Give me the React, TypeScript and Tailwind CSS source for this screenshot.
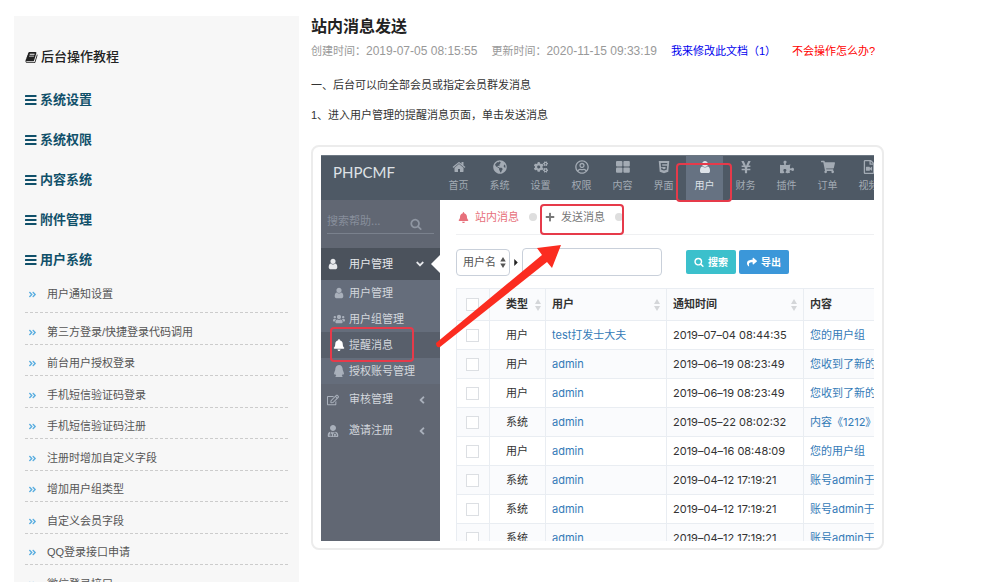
import { ReactNode } from "react";
import {
  FaAngleDoubleRight,
  FaAngleDown,
  FaAngleLeft,
  FaBell,
  FaCogs,
  FaGlobeAmericas,
  FaHtml5,
  FaPlus,
  FaPuzzlePiece,
  FaQq,
  FaRegEdit,
  FaRegFileVideo,
  FaRegUserCircle,
  FaShare,
  FaShoppingCart,
  FaUserMd,
  FaUsers,
  FaYenSign,
} from "react-icons/fa";

type IconProps = { className?: string };

function BookIcon({ className }: IconProps) {
  return (
    <svg viewBox="0 0 1792 1792" fill="currentColor" className={className}>
      <path d="M1703 478q40 57 18 129l-275 906q-19 64-76.5 107.5t-122.5 43.5h-923q-77 0-148.5-53.5t-99.5-131.5q-24-67-2-127 0-4 3-27t4-37q1-8-3-21.5t-3-19.5q2-11 8-21t16.5-23.5 16.5-23.5q23-38 45-91.5t30-91.5q3-10 .5-30t-.5-28q3-11 17-28t17-23q21-36 42-92t25-90q1-9-2.5-32t.5-28q4-13 22-30.5t22-22.5q19-26 42.5-84.5t27.5-96.5q1-8-3-25.5t-2-26.5q2-8 9-18t18-23 17-21q8-12 16.5-30.5t15-35 16-36 19.5-32 26.5-23.5 36-11.5 47.5 5.5l-1 3q38-9 51-9h761q74 0 114 56t18 130l-274 906q-36 119-71.5 153.5t-128.5 34.5h-869q-27 0-38 15-11 16-1 43 24 70 144 70h923q29 0 56-15.5t35-41.5l300-987q7-22 5-57 38 15 59 43zm-1064 2q-4 13 2 22.5t20 9.5h608q13 0 25.5-9.5t16.5-22.5l21-64q4-13-2-22.5t-20-9.5h-608q-13 0-25.5 9.5t-16.5 22.5zm-83 256q-4 13 2 22.5t20 9.5h608q13 0 25.5-9.5t16.5-22.5l21-64q4-13-2-22.5t-20-9.5h-608q-13 0-25.5 9.5t-16.5 22.5z" />
    </svg>
  );
}

function BarsIcon({ className }: IconProps) {
  return (
    <svg viewBox="0 0 12 12" fill="currentColor" className={className}>
      <rect x="0" y="1" width="11.5" height="2" rx=".5" />
      <rect x="0" y="5" width="11.5" height="2" rx=".5" />
      <rect x="0" y="9" width="11.5" height="2" rx=".5" />
    </svg>
  );
}

function HomeIcon({ className }: IconProps) {
  return (
    <svg viewBox="0 0 1792 1792" fill="currentColor" className={className}>
      <path d="M1472 992v480q0 26-19 45t-45 19h-384v-384h-256v384h-384q-26 0-45-19t-19-45v-480q0-1 .5-3t.5-3l575-474 575 474q1 2 1 6zm223-69l-62 74q-8 9-21 11h-3q-13 0-21-7l-692-577-692 577q-12 8-24 7-13-2-21-11l-62-74q-8-10-7-23.5t11-21.5l719-599q32-26 76-26t76 26l244 204v-195q0-14 9-23t23-9h192q14 0 23 9t9 23v408l219 182q10 8 11 21.5t-7 23.5z" />
    </svg>
  );
}

function UserIcon({ className }: IconProps) {
  return (
    <svg viewBox="0 0 1792 1792" fill="currentColor" className={className}>
      <path d="M1536 1399q0 109-62.5 187t-150.5 78h-854q-88 0-150.5-78t-62.5-187q0-85 8.5-160.5t31.5-152 58.5-131 94-89 134.5-34.5q131 128 313 128t313-128q76 0 134.5 34.5t94 89 58.5 131 31.5 152 8.5 160.5zm-256-887q0 159-112.5 271.5t-271.5 112.5-271.5-112.5-112.5-271.5 112.5-271.5 271.5-112.5 271.5 112.5 112.5 271.5z" />
    </svg>
  );
}

function SearchIcon({ className }: IconProps) {
  return (
    <svg viewBox="0 0 1792 1792" fill="currentColor" className={className}>
      <path d="M1216 832q0-185-131.5-316.5t-316.5-131.5-316.5 131.5-131.5 316.5 131.5 316.5 316.5 131.5 316.5-131.5 131.5-316.5zm512 832q0 52-38 90t-90 38q-54 0-90-38l-343-342q-179 124-399 124-143 0-273.5-55.5t-225-150-150-225-55.5-273.5 55.5-273.5 150-225 225-150 273.5-55.5 273.5 55.5 225 150 150 225 55.5 273.5q0 220-124 399l343 343q37 37 37 90z" />
    </svg>
  );
}

function TilesIcon({ className }: IconProps) {
  return (
    <svg viewBox="0 0 14 14" fill="currentColor" className={className}>
      <rect x="0" y="1" width="6.4" height="5.4" rx="1" />
      <rect x="7.4" y="1" width="6.4" height="5.4" rx="1" />
      <rect x="0" y="7.4" width="6.4" height="5.4" rx="1" />
      <rect x="7.4" y="7.4" width="6.4" height="5.4" rx="1" />
    </svg>
  );
}

function SortIcon({ className }: IconProps) {
  return (
    <svg viewBox="0 0 6 12" fill="currentColor" className={className}>
      <path d="M3 0 6 5H0zM3 12 0 7h6z" />
    </svg>
  );
}

const chapters = ["系统设置", "系统权限", "内容系统", "附件管理", "用户系统"];

const articles = [
  "第三方登录/快捷登录代码调用",
  "前台用户授权登录",
  "手机短信验证码登录",
  "手机短信验证码注册",
  "注册时增加自定义字段",
  "增加用户组类型",
  "自定义会员字段",
  "QQ登录接口申请",
  "微信登录接口",
];

function ArticleLink({ children }: { children: ReactNode }) {
  return (
    <a href="#" className="flex items-center text-[11px] leading-4 text-[#555]">
      <FaAngleDoubleRight className="ml-[3px] mr-[10px] h-[9px] w-[9px] text-[#5aaee0]" />
      {children}
    </a>
  );
}

function DocsSidebar() {
  return (
    <aside className="w-[285px] shrink-0 bg-[#f7f7f7] px-[11px] pt-8">
      <h2 className="flex h-[18px] items-center gap-[3px] text-[13px] font-medium text-[#222]">
        <BookIcon className="h-[13px] w-[13px]" />
        后台操作教程
      </h2>
      <nav className="mt-[14px]">
        {chapters.map((name) => (
          <a
            key={name}
            href="#"
            className="flex h-10 items-center gap-[3px] text-[13px] font-bold text-[#10506a]"
          >
            <BarsIcon className="h-3 w-3" />
            {name}
          </a>
        ))}
        <ul>
          <li className="border-b border-dashed border-[#ccc] pb-[10px] pt-[6px]">
            <ArticleLink>用户通知设置</ArticleLink>
          </li>
          {articles.map((name) => (
            <li
              key={name}
              className="flex h-[31px] flex-col justify-end border-b border-dashed border-[#ccc] pb-1 even:h-8"
            >
              <ArticleLink>{name}</ArticleLink>
            </li>
          ))}
        </ul>
      </nav>
    </aside>
  );
}

const topNav = [
  { label: "首页", icon: HomeIcon },
  { label: "系统", icon: FaGlobeAmericas },
  { label: "设置", icon: FaCogs },
  { label: "权限", icon: FaRegUserCircle },
  { label: "内容", icon: TilesIcon },
  { label: "界面", icon: FaHtml5 },
  { label: "用户", icon: UserIcon, active: true },
  { label: "财务", icon: FaYenSign },
  { label: "插件", icon: FaPuzzlePiece },
  { label: "订单", icon: FaShoppingCart },
  { label: "视频", icon: FaRegFileVideo },
];

function TopBar() {
  return (
    <header className="flex h-[45px] overflow-hidden border-t border-[#6d7883] bg-[#4e5965]">
      <div className="w-[119px] shrink-0 pl-3 pt-1 font-['Lato','Noto_Sans_CJK_SC',sans-serif] text-[15px] leading-6 text-[#dfe2e6]">
        PHPCMF
      </div>
      <nav className="flex gap-1">
        {topNav.map(({ label, icon: Icon, active }) => (
          <a
            key={label}
            href="#"
            className={`flex w-[37px] shrink-0 flex-col items-center gap-1 pt-1 text-[10px] leading-[14px] ${
              active ? "bg-[#667282] text-[#dde2e8]" : "text-[#a3abb4]"
            }`}
          >
            <Icon className="h-[14px] w-[14px]" />
            {label}
          </a>
        ))}
      </nav>
    </header>
  );
}

const subMenu = [
  { label: "用户管理", icon: UserIcon },
  { label: "用户组管理", icon: FaUsers },
  { label: "提醒消息", icon: FaBell, active: true },
  { label: "授权账号管理", icon: FaQq },
];

const sideMenu = [
  { label: "审核管理", icon: FaRegEdit },
  { label: "邀请注册", icon: FaUserMd },
];

function AdminSidebar() {
  return (
    <aside className="w-[119px] shrink-0 bg-[#616773] text-[11px] text-[#d3d7dd]">
      <div className="flex h-12 items-start px-[6px] pt-[10px]">
        <label className="flex h-6 w-full items-center border-b border-[#7a818d]">
          <input
            aria-label="搜索帮助"
            placeholder="搜索帮助..."
            className="w-full min-w-0 bg-transparent text-[11px] outline-none placeholder:text-[#878e9b]"
          />
          <SearchIcon className="mr-3 mt-1 h-3 w-3 shrink-0 text-[#8f96a2]" />
        </label>
      </div>
      <a href="#" className="relative flex h-8 items-center bg-[#4b525c] pl-[6px] text-[#e6e8eb]">
        <UserIcon className="mr-[10px] h-3 w-3" />
        用户管理
        <FaAngleDown className="ml-auto mr-[14px] h-3 w-3" />
        <svg viewBox="0 0 9 18" className="absolute right-0 top-[7px] h-[18px] w-[9px]" fill="#fff">
          <path d="M9 0v18L0 9z" />
        </svg>
      </a>
      <div className="bg-[#656d7b]">
        {subMenu.map(({ label, icon: Icon, active }) => (
          <a
            key={label}
            href="#"
            className={`flex h-[26px] items-center gap-1 pl-3 ${active ? "bg-[#585f6b]" : ""}`}
          >
            <Icon className={`h-3 w-3 ${active ? "text-white" : "text-[#a9b0bb]"}`} />
            {label}
          </a>
        ))}
      </div>
      {sideMenu.map(({ label, icon: Icon }) => (
        <a key={label} href="#" className="flex h-[31px] items-center pl-[6px]">
          <Icon className="mr-[10px] h-3 w-3 text-[#a9b0bb]" />
          {label}
          <FaAngleLeft className="ml-auto mr-3 h-3 w-3 text-[#a9b0bb]" />
        </a>
      ))}
    </aside>
  );
}

const messages = [
  { type: "用户", user: "test打发士大夫", time: "2019–07–04 08:44:35", text: "您的用户组" },
  { type: "用户", user: "admin", time: "2019–06–19 08:23:49", text: "您收到了新的" },
  { type: "用户", user: "admin", time: "2019–06–19 08:23:49", text: "您收到了新的" },
  { type: "系统", user: "admin", time: "2019–05–22 08:02:32", text: "内容《1212》" },
  { type: "用户", user: "admin", time: "2019–04–16 08:48:09", text: "您的用户组" },
  { type: "系统", user: "admin", time: "2019–04–12 17:19:21", text: "账号admin于" },
  { type: "系统", user: "admin", time: "2019–04–12 17:19:21", text: "账号admin于" },
  { type: "系统", user: "admin", time: "2019–04–12 17:19:21", text: "账号admin于" },
];

const checkbox = "block h-[13px] w-[13px] appearance-none border border-[#dcdfe3] bg-white";
const cell = "border border-[#e9edf2] px-[6px] text-left whitespace-nowrap";

function SortableHead({ children }: { children: ReactNode }) {
  return (
    <span className="flex items-center justify-between">
      {children}
      <SortIcon className="h-3 w-[6px] text-[#d4d6d9]" />
    </span>
  );
}

function MessageTable() {
  return (
    <table className="mt-3 w-[480px] table-fixed border-collapse text-[11px] text-[#333]">
      <colgroup>
        <col className="w-[33px]" />
        <col className="w-[56px]" />
        <col className="w-[121px]" />
        <col className="w-[137px]" />
        <col />
      </colgroup>
      <thead>
        <tr className="h-8 bg-[#fafbfd]">
          <th className={cell}>
            <input type="checkbox" aria-label="全选" className={`${checkbox} ml-[3px]`} />
          </th>
          <th className="border border-[#e9edf2] pl-4 pr-1 text-left">
            <SortableHead>类型</SortableHead>
          </th>
          <th className={cell}>
            <SortableHead>用户</SortableHead>
          </th>
          <th className={cell}>
            <SortableHead>通知时间</SortableHead>
          </th>
          <th className={cell}>内容</th>
        </tr>
      </thead>
      <tbody>
        {messages.map((m, i) => (
          <tr key={i} className="h-[29px] even:bg-[#fafbfd]">
            <td className={cell}>
              <input type="checkbox" aria-label={`选择 ${i + 1}`} className={`${checkbox} ml-[3px]`} />
            </td>
            <td className="border border-[#e9edf2] pl-4 text-left">{m.type}</td>
            <td className={cell}>
              <a href="#" className="text-[#337ab7]">{m.user}</a>
            </td>
            <td className={cell}>{m.time}</td>
            <td className={cell}>
              <a href="#" className="text-[#337ab7]">{m.text}</a>
            </td>
          </tr>
        ))}
      </tbody>
    </table>
  );
}

function AdminContent() {
  return (
    <section className="min-w-0 flex-1 overflow-hidden bg-white pl-4">
      <div className="flex h-[35px] items-center border-b border-[#eff0f2] text-[11px] text-[#777]">
        <a href="#" className="flex items-center gap-[6px] pl-[2px] text-[#e7707b]">
          <FaBell className="h-[11px] w-[11px]" />
          站内消息
        </a>
        <span className="ml-[10px] h-2 w-2 rounded-full bg-[#dedede]" />
        <a href="#" className="ml-2 flex items-center gap-[6px]">
          <FaPlus className="h-[10px] w-[10px]" />
          发送消息
        </a>
        <span className="ml-[10px] h-2 w-2 rounded-full bg-[#dedede]" />
      </div>
      <form className="mt-[13px] flex h-7 items-center text-[11px] text-[#555]">
        <span className="relative">
          <select
            aria-label="搜索字段"
            className="h-[27px] w-[54px] appearance-none rounded border border-[#c9d0da] bg-white pl-[6px]"
          >
            <option>用户名</option>
          </select>
          <SortIcon className="pointer-events-none absolute right-1 top-2 h-[11px] w-[6px]" />
        </span>
        <svg viewBox="0 0 4 8" className="mx-1 h-[7px] w-1 shrink-0" fill="#222">
          <path d="M0 0 4 4 0 8z" />
        </svg>
        <input
          aria-label="关键字"
          className="h-7 w-[140px] rounded border border-[#c9d0da] bg-white px-2 outline-none"
        />
        <button
          type="button"
          className="ml-6 flex h-6 w-[50px] shrink-0 items-center justify-center gap-1 rounded-xs bg-[#3bc0cc] text-[10px] font-bold text-white"
        >
          <SearchIcon className="h-[10px] w-[10px]" />
          搜索
        </button>
        <button
          type="button"
          className="ml-[3px] flex h-6 w-[50px] shrink-0 items-center justify-center gap-1 rounded-xs bg-[#3b97d9] text-[10px] font-bold text-white"
        >
          <FaShare className="h-[10px] w-[10px]" />
          导出
        </button>
      </form>
      <MessageTable />
    </section>
  );
}

function Annotations() {
  return (
    <>
      <div className="absolute left-[355px] top-2 h-[39px] w-14 rounded border-2 border-[#e63a4a]" />
      <div className="absolute left-[219px] top-[49px] h-[31px] w-[84px] rounded border-2 border-[#e63a4a]" />
      <div className="absolute left-[9px] top-[172px] h-[35px] w-[84px] rounded border-2 border-[#e63a4a]" />
      <svg
        viewBox="0 0 128 106"
        className="absolute left-[114px] top-[88px] h-[106px] w-32"
        fill="#fb2c20"
      >
        <path d="M1 100 107 12 102 5 126 2 117 25 112 19 5 104Q1 105 1 100z" />
      </svg>
    </>
  );
}

function AdminShot() {
  return (
    <figure className="mt-[21px] max-w-[573px] rounded-lg border-2 border-[#ececec] p-2 pb-[7px]">
      <div className="relative flex aspect-[553/386] flex-col overflow-hidden font-['Inter','Noto_Sans_CJK_SC',sans-serif]">
        <TopBar />
        <div className="flex min-h-0 flex-1">
          <AdminSidebar />
          <AdminContent />
        </div>
        <Annotations />
      </div>
    </figure>
  );
}

export default function App() {
  return (
    <div className="flex h-screen overflow-hidden bg-white pl-[14px] pt-4 font-['Liberation_Sans','Noto_Sans_CJK_SC',sans-serif]">
      <DocsSidebar />
      <main className="min-w-0 flex-1 px-3">
        <h1 className="text-base leading-[22px] font-bold text-[#222]">站内消息发送</h1>
        <p className="mt-1 flex items-center text-[11px] leading-[18px] text-[#999]">
          <span>创建时间：</span>
          <time className="mr-[14px] text-xs leading-[18px]">2019-07-05 08:15:55</time>
          <span>更新时间：</span>
          <time className="mr-[14px] text-xs leading-[18px]">2020-11-15 09:33:19</time>
          <a href="#" className="mr-4 text-[#0000ee]">我来修改此文档（1）</a>
          <a href="#" className="text-[#f00]">不会操作怎么办?</a>
        </p>
        <p className="mt-4 text-[11px] leading-[18px] text-[#333]">
          一、后台可以向全部会员或指定会员群发消息
        </p>
        <p className="mt-3 text-[11px] leading-[18px] text-[#333]">
          1、进入用户管理的提醒消息页面，单击发送消息
        </p>
        <AdminShot />
      </main>
    </div>
  );
}
